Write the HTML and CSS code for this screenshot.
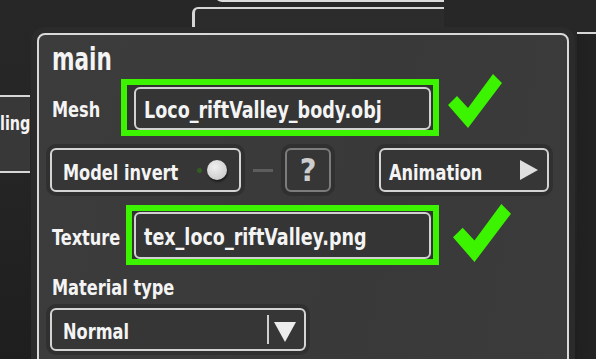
FILE: index.html
```html
<!DOCTYPE html>
<html lang="en">
<head>
  <meta charset="UTF-8" />
  <title>Model editor</title>
  <link rel="stylesheet" href="styles.css">
</head>
<body>

<div id="desk">
  <!-- windows behind -->
  <div class="win win-top"></div>
  <div class="win win-top-inner"></div>
  <div class="win win-right"></div>
  <div class="win win-left"><span class="txt">ling</span></div>

  <!-- main panel -->
  <div id="panel">
    <h1><span class="txt">main</span></h1>

    <div class="row row-mesh">
      <span class="label"><span class="txt">Mesh</span></span>
      <div class="ok-box">
        <div class="field"><span class="txt">Loco_riftValley_body.obj</span></div>
      </div>
      <svg class="check" viewBox="0 0 54 54"><polygon points="0,31 9,22 20,34 45,0 54,9 20,54" /></svg>
    </div>

    <div class="row row-btns">
      <div class="btn toggle-btn">
        <span class="txt">Model invert</span>
        <span class="led"></span>
        <span class="knob"></span>
      </div>
      <span class="dash"></span>
      <div class="btn help-btn">?</div>
      <div class="btn anim-btn">
        <span class="txt">Animation</span>
        <span class="play"></span>
      </div>
    </div>

    <div class="row row-tex">
      <span class="label"><span class="txt">Texture</span></span>
      <div class="ok-box">
        <div class="field"><span class="txt">tex_loco_riftValley.png</span></div>
      </div>
      <svg class="check check-lg" viewBox="0 0 54 54"><polygon points="0,31 9,22 20,34 45,0 54,9 20,54" /></svg>
    </div>

    <div class="label mat-label"><span class="txt">Material type</span></div>
    <div class="btn select">
      <span class="txt">Normal</span>
      <span class="sep"></span>
      <span class="down"></span>
    </div>
  </div>
</div>

</body>
</html>
```

FILE: styles.css
```css
* {
  box-sizing: border-box;
}

body {
  margin: 0;
  background: #242424;
  font-family: 'DejaVu Sans Condensed', 'DejaVu Sans', sans-serif;
  font-weight: bold;
  color: #f4f4f4;
  overflow: hidden;
}

/* the game font is tall and narrow */
.txt {
  display: inline-block;
  white-space: nowrap;
  transform: translateY(2px) scaleY(1.22);
  transform-origin: 0 60%;
}

#desk {
  position: relative;
  width: 596px;
  height: 359px;
  overflow: hidden;
  background: linear-gradient(180deg, #272727 0%, #252525 45%, #1e1e1e 100%);
}

/* background windows */
.win {
  position: absolute;
}

.win-top {
  left: 192px;
  top: 7px;
  width: 252px;
  height: 40px;
  border-top: 2px solid #d6d6d6;
  border-left: 3px solid #d6d6d6;
  border-top-left-radius: 6px;
  background: #2c2c2c;
}

.win-top-inner {
  left: 216px;
  top: -20px;
  width: 228px;
  height: 22px;
  border-bottom: 2px solid #dcdcdc;
  border-left: 2px solid #dcdcdc;
  border-bottom-left-radius: 6px;
  background: #303030;
}

.win-right {
  left: 577px;
  top: 32px;
  width: 40px;
  height: 340px;
  border-top: 2px solid #d6d6d6;
  background: linear-gradient(90deg, #202020, #262626);
}

.win-left {
  left: 0;
  top: 95px;
  width: 30px;
  height: 78px;
  border-top: 2px solid #d6d6d6;
  border-bottom: 2px solid #d6d6d6;
  background: #383838;
  font-size: 16px;
  padding: 15px 0 0 0;
}

/* main panel */
#panel {
  position: absolute;
  left: 37px;
  top: 33px;
  width: 532px;
  height: 360px;
  background: linear-gradient(100deg, #3c3c3c, #393939 60%, #3b3b3b);
  border: 2px solid #d9d9d9;
  border-radius: 8px;
  box-shadow: 0 0 0 6px #2b2b2b;
  padding: 9px 11px 0 11px;
}

h1 {
  margin: 0 0 0 2px;
  font-size: 24px;
  line-height: 30px;
}

h1 .txt {
  transform: translateY(1px) scaleY(1.3);
}

.row {
  display: flex;
  align-items: center;
}

.label {
  font-size: 18px;
  margin-left: 2px;
}

.row-mesh {
  margin-top: 5px;
  height: 57px;
}

.row-mesh .label {
  width: 69px;
}

.ok-box {
  border: 6px solid #3cf400;
  background: #323232;
}

.row-mesh .ok-box {
  width: 318px;
  height: 57px;
  padding: 2px 0 0 7px;
}

.field {
  height: 100%;
  width: 297px;
  border: 2px solid #d2d2d2;
  border-radius: 6px;
  background: #353535;
  font-size: 19.5px;
  padding: 0 0 0 8px;
  display: flex;
  align-items: center;
}

.check {
  width: 54px;
  height: 54px;
  margin: -14px 0 0 9px;
  fill: #3cf400;
}

.check-lg {
  width: 58px;
  height: 60px;
  margin: -4px 0 0 14px;
}

.row-btns {
  margin-top: 12px;
  height: 44px;
}

.btn {
  height: 44px;
  border: 2px solid #d4d4d4;
  border-radius: 6px;
  background: #363636;
  box-shadow: 0 0 0 4px #303030;
  font-size: 18px;
  display: flex;
  align-items: center;
  padding: 0 0 0 11px;
}

.toggle-btn {
  width: 191px;
}

.led {
  width: 5px;
  height: 5px;
  border-radius: 50%;
  background: #335f22;
  margin-left: auto;
}

.knob {
  width: 20px;
  height: 20px;
  border-radius: 50%;
  background: radial-gradient(circle at 40% 35%, #f0f0f0, #cfcfcf 70%, #aaaaaa);
  box-shadow: 1px 2px 2px #1c1c1c;
  margin: 0 12px 0 5px;
}

.dash {
  width: 20px;
  height: 3px;
  background: #5d5d5d;
  margin: 0 12px 0 12px;
}

.help-btn {
  width: 46px;
  border-color: #7c7c7c;
  color: #cdcdcd;
  font-size: 32px;
  justify-content: center;
  padding: 0;
}

.anim-btn {
  width: 170px;
  margin-left: 48px;
  padding-left: 8px;
}

.play {
  margin-left: auto;
  margin-right: 9px;
  width: 0;
  height: 0;
  border-top: 10px solid transparent;
  border-bottom: 10px solid transparent;
  border-left: 18px solid #dedede;
}

.row-tex {
  margin-top: 13px;
  height: 60px;
}

.row-tex .label {
  width: 74px;
}

.row-tex .ok-box {
  width: 313px;
  height: 60px;
  padding: 1px 0 0 2px;
}

.mat-label {
  margin-top: 9px;
  line-height: 24px;
}

.select {
  margin-top: 10px;
  width: 256px;
  height: 43px;
}

.sep {
  margin-left: auto;
  width: 2px;
  height: 29px;
  background: #cfcfcf;
}

.down {
  margin: 4px 8px 0 5px;
  width: 0;
  height: 0;
  border-left: 11px solid transparent;
  border-right: 11px solid transparent;
  border-top: 20px solid #ececec;
}
```
